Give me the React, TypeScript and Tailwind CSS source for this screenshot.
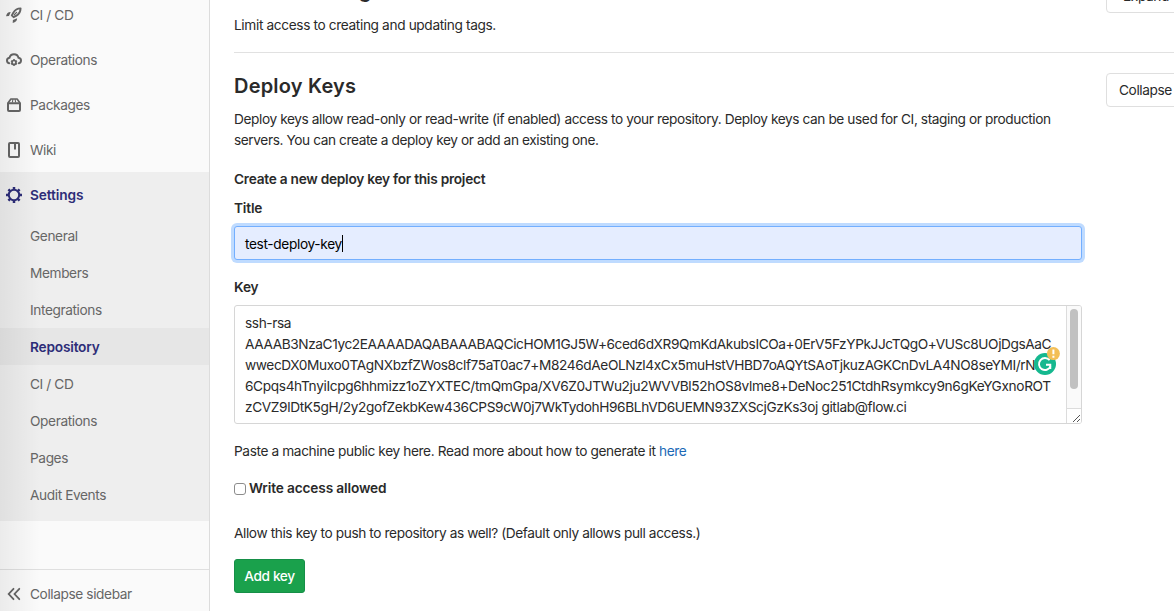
import React from "react";

type IconProps = { children: React.ReactNode };

function Icon({ children }: IconProps) {
  return (
    <svg viewBox="0 0 16 16" className="size-4 shrink-0" fill="none" stroke="currentColor" strokeWidth="2">
      {children}
    </svg>
  );
}

const RocketIcon = () => (
  <Icon>
    <path d="M14.600 1.400c-3.300.1-5.600 1.400-7.300 4.300L5.800 8.400l1.800 1.800 2.900-1.600c2.800-1.700 4-3.900 4.100-7.200z" strokeWidth="1.900" strokeLinejoin="round" />
    <path d="M10.600 5.400 8.300 7.700" strokeWidth="1.300" strokeLinecap="round" />
    <path d="M4.700 4.900C2.200 4.800.600 6.300 0 9.300l3-.2zM11.100 11.300c.1 2.500-1.400 4.100-4.400 4.700l.2-3z" fill="currentColor" stroke="none" />
  </Icon>
);

const OperationsIcon = () => (
  <Icon>
    <path d="M3.200 11.300C1.800 10.900 1 9.900 1 8.500c0-1.500 1-2.600 2.500-2.800C4 3.600 5.700 2.200 8 2.200s4 1.400 4.500 3.500C14 5.900 15 7 15 8.500c0 1.400-.8 2.400-2.200 2.800" strokeWidth="2" strokeLinecap="round" />
    <circle cx="8" cy="10.500" r="2" strokeWidth="1.700" />
    <path d="M8 7.100v1.200M8 12.700v1.300M5 8.800l1.100.6M9.900 11.600l1.100.6M5 12.200l1.100-.6M9.900 9.400l1.100-.6" strokeWidth="1.500" />
  </Icon>
);

const PackageIcon = () => (
  <Icon>
    <path d="M2 6.300h12v6.700a1 1 0 0 1-1 1H3a1 1 0 0 1-1-1z" strokeWidth="2" strokeLinejoin="round" />
    <path d="M2 6 4.900 2h6.200L14 6" strokeWidth="1.700" strokeLinejoin="round" />
    <path d="M6.900 2 6.400 5.500M9.100 2l.5 3.500" strokeWidth="1.100" />
  </Icon>
);

const WikiIcon = () => (
  <Icon>
    <rect x="3" y="1" width="10" height="14" rx="1" />
    <path d="M9 2v5.500" />
  </Icon>
);

const SettingsIcon = () => (
  <Icon>
    <circle cx="8" cy="8" r="5.200" strokeWidth="2" />
    <path
      d="M8 0v2.500M8 13.500v2.500M0 8h2.500M13.500 8h2.500M2.400 2.400l1.700 1.700M11.900 11.900l1.700 1.700M2.400 13.600l1.700-1.700M11.900 4.100l1.700-1.700"
      strokeWidth="2.500"
    />
  </Icon>
);

const CollapseIcon = () => (
  <Icon>
    <path d="M7.500 2.800 2.700 8l4.800 5.200M13.300 2.800 8.500 8l4.800 5.200" strokeWidth="1.800" strokeLinecap="round" />
  </Icon>
);

const navItems = [
  { label: "CI / CD", icon: <RocketIcon /> },
  { label: "Operations", icon: <OperationsIcon /> },
  { label: "Packages", icon: <PackageIcon /> },
  { label: "Wiki", icon: <WikiIcon /> },
];

const settingsItems = ["General", "Members", "Integrations", "Repository", "CI / CD", "Operations", "Pages", "Audit Events"];

const keyLines = [
  { text: "ssh-rsa", tracking: "tracking-[-0.4px]" },
  {
    text: "AAAAB3NzaC1yc2EAAAADAQABAAABAQCicHOM1GJ5W+6ced6dXR9QmKdAkubsICOa+0ErV5FzYPkJJcTQgO+VUSc8UOjDgsAaC",
    tracking: "tracking-[-0.415px]",
  },
  {
    text: "wwecDX0Muxo0TAgNXbzfZWos8clf75aT0ac7+M8246dAeOLNzl4xCx5muHstVHBD7oAQYtSAoTjkuzAGKCnDvLA4NO8seYMI/rNl",
    tracking: "tracking-[-0.4px]",
  },
  {
    text: "6Cpqs4hTnyiIcpg6hhmizz1oZYXTEC/tmQmGpa/XV6Z0JTWu2ju2WVVBl52hOS8vlme8+DeNoc251CtdhRsymkcy9n6gKeYGxnoROT",
    tracking: "tracking-[-0.365px]",
  },
  {
    text: "zCVZ9lDtK5gH/2y2gofZekbKew436CPS9cW0j7WkTydohH96BLhVD6UEMN93ZXScjGzKs3oj gitlab@flow.ci",
    tracking: "tracking-[-0.38px]",
  },
];

function Sidebar() {
  return (
    <aside className="relative flex h-full w-[210px] shrink-0 flex-col border-r border-[#dcdcdc] bg-[#fafafa] text-[#666]">
      <nav className="-mt-2">
        {navItems.map((item) => (
          <a key={item.label} className="flex h-[45px] items-center gap-2 pl-1.5">
            {item.icon}
            <span className="pt-0.5">{item.label}</span>
          </a>
        ))}
        <div className="h-[349px] bg-[#eee]">
          <a className="flex h-[45px] items-center gap-2 pl-1.5 font-semibold tracking-[-0.1px] text-[#2d2d78]">
            <SettingsIcon />
            <span className="pt-0.5">Settings</span>
          </a>
          {settingsItems.map((label, i) => (
            <a
              key={i}
              className={
                label === "Repository"
                  ? "flex h-[37px] items-center bg-[#e6e6e6] pt-0.5 pl-[30px] font-semibold tracking-[-0.2px] text-[#2d2d78]"
                  : "flex h-[37px] items-center pt-0.5 pl-[30px]"
              }
            >
              {label}
            </a>
          ))}
        </div>
      </nav>
      <a className="mt-auto flex h-[42px] shrink-0 items-start gap-2 border-t border-[#dfdfdf] pt-[13px] pl-1.5">
        <span className="flex h-[21px] items-center">
          <CollapseIcon />
        </span>
        <span className="pt-px">Collapse sidebar</span>
      </a>
      <div className="pointer-events-none absolute inset-y-0 left-0 w-10 bg-linear-to-r from-black/6 to-transparent" />
    </aside>
  );
}

function AssistantBadge() {
  return (
    <svg viewBox="0 0 26 28" className="absolute top-[41px] left-[799px] h-7 w-[26px]">
      <circle cx="11" cy="17" r="11" fill="#15b88f" />
      <path d="M15.600 13.200a6 6 0 1 0 .9 6.200" fill="none" stroke="#fff" strokeWidth="1.900" />
      <path d="M12 17.700h4.300v4.300" fill="none" stroke="#fff" strokeWidth="1.900" />
      <circle cx="19.400" cy="6.600" r="6.500" fill="#f3bf57" />
      <path d="M19.400 2.600v4.600M19.400 8.700v2" stroke="#fff" strokeWidth="2" />
    </svg>
  );
}

function KeyField() {
  return (
    <div className="relative mt-[7px] flex h-[119px] w-[848px] overflow-hidden rounded-[3px] border border-[#d6d6d6]">
      <div className="min-w-0 flex-1 pt-[7px] pl-2.5 leading-[21px] whitespace-nowrap">
        {keyLines.map((line) => (
          <div key={line.text} className={line.tracking}>
            {line.text}
          </div>
        ))}
      </div>
      <div className="flex w-[15px] shrink-0 flex-col border-l border-[#dcdcdc] bg-[#fafafa]">
        <div className="mx-[3px] mt-[3px] h-20 rounded-full bg-[#c1c1c1]" />
        <div className="mt-auto h-[15px] border-t border-[#dcdcdc] bg-white">
          <svg viewBox="0 0 14 14" className="size-3.5" stroke="#555" strokeWidth="1">
            <path d="M6 13l7-7M10 13l3-3" />
          </svg>
        </div>
      </div>
      <AssistantBadge />
    </div>
  );
}

function Main() {
  return (
    <main className="h-full flex-1 overflow-hidden pl-6 text-[#2a2a2a]">
      <section className="flex h-[53px] w-[964px] items-end justify-between border-b border-[#e1e1e1]">
        <div className="mb-4">
          <h4 className="mb-[11px] text-[20px] leading-[26px] font-semibold tracking-[0.2px]">Protected Tags</h4>
          <p className="tracking-[-0.37px]">Limit access to creating and updating tags.</p>
        </div>
        <button className="mb-[39px] flex h-[34px] w-[92px] items-center rounded-[4px] border border-[#dfdfdf] pt-px pl-4">Expand</button>
      </section>
      <section className="w-[964px]">
        <div className="flex justify-between">
          <h4 className="mt-5 text-[20px] leading-[26px] font-semibold tracking-[0.2px]">Deploy Keys</h4>
          <button className="mt-5 flex h-[34px] w-[92px] items-center rounded-[4px] border border-[#dfdfdf] pt-px pl-3">Collapse</button>
        </div>
        <p className="mt-0.5 w-[848px] tracking-[-0.415px] whitespace-nowrap">
          Deploy keys allow read-only or read-write (if enabled) access to your repository. Deploy keys can be used for CI, staging or production
          <br />
          servers. You can create a deploy key or add an existing one.
        </p>
        <h5 className="mt-[18px] font-semibold tracking-[-0.26px]">Create a new deploy key for this project</h5>
        <label className="mt-2 block font-semibold tracking-[-0.2px]">Title</label>
        <div className="mt-[7px] flex h-[34px] w-[848px] items-center rounded-[3px] border border-[#73afff] bg-[#e5edff] pl-2.5 text-black ring-3 ring-[#bfdbff]">
          <span className="pt-0.5 tracking-[-0.35px]">test-deploy-key</span>
          <span className="h-[17px] w-px bg-black" />
        </div>
        <label className="mt-[17px] block font-semibold tracking-[-0.2px]">Key</label>
        <KeyField />
        <p className="mt-[17px] tracking-[-0.39px]">
          Paste a machine public key here. Read more about how to generate it <a className="text-[#1b69b6]">here</a>
        </p>
        <div className="mt-4 flex items-center gap-[3px] font-semibold tracking-[-0.15px]">
          <span className="size-3 rounded-[3px] border border-[#8c8c8c] bg-white" />
          Write access allowed
        </div>
        <p className="mt-6">Allow this key to push to repository as well? (Default only allows pull access.)</p>
        <button className="mt-[15px] flex h-[34px] w-[71px] items-center justify-center rounded-[3px] border border-[#168f48] bg-[#1aa14c] font-medium text-white">
          Add key
        </button>
      </section>
    </main>
  );
}

export default function App() {
  return (
    <div className="flex h-[611px] w-[1174px] overflow-hidden bg-white font-['Inter','Liberation_Sans',sans-serif] text-[13.7px] leading-[21px] tracking-[-0.4px]">
      <Sidebar />
      <Main />
    </div>
  );
}
